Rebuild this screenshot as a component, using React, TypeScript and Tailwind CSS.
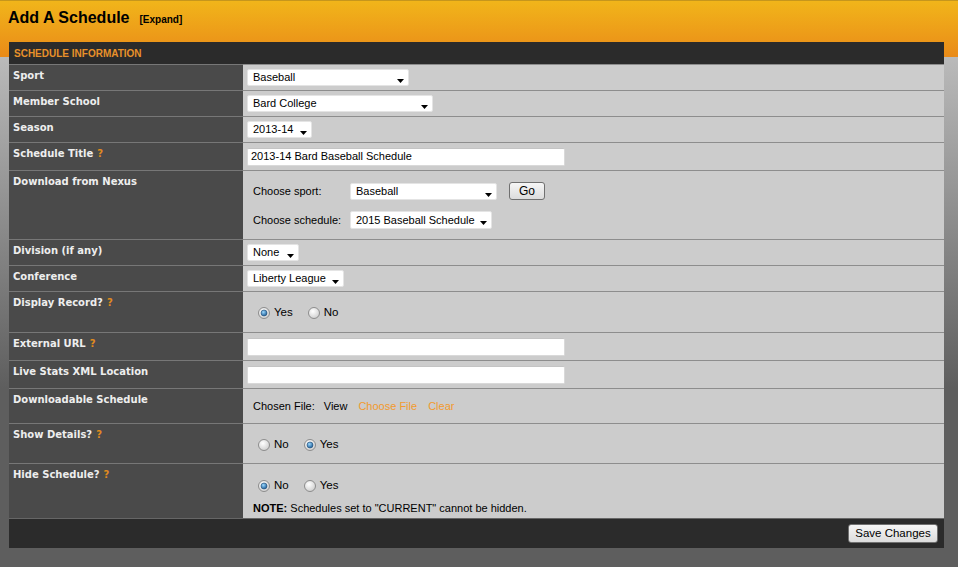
import React from "react";

const body = "font-['Liberation_Sans',Arial,sans-serif]";
const labelFont = "font-['DejaVu_Sans',Verdana,sans-serif]";

function Arrow() {
  return (
    <svg className="absolute right-[4px] top-[9px]" width="7" height="4" viewBox="0 0 7 4">
      <polygon points="0,0 7,0 3.5,4" fill="#000" />
    </svg>
  );
}

function Select({ className, children }: { className: string; children: React.ReactNode }) {
  return (
    <div
      className={`relative h-[17px] bg-white border border-[#e4e4e4] rounded-[2px] flex items-center pl-[5px] text-[11px] text-black ${className}`}
    >
      <span>{children}</span>
      <Arrow />
    </div>
  );
}

function TextInput({ value }: { value?: string }) {
  return (
    <div className="h-[18px] w-[318px] bg-white border border-[#d9d9d9] border-t-[#c4c4c4] rounded-[2px] flex items-center pl-[3px] text-[11px] text-black">
      {value}
    </div>
  );
}

function Radio({ checked }: { checked?: boolean }) {
  return (
    <svg width="12" height="12" viewBox="0 0 12 12" className="shrink-0">
      <defs>
        <radialGradient id="radioBg" cx="40%" cy="35%" r="70%">
          <stop offset="0" stopColor="#ffffff" />
          <stop offset="1" stopColor="#cdcdcd" />
        </radialGradient>
        <radialGradient id="radioDot" cx="40%" cy="35%" r="70%">
          <stop offset="0" stopColor="#9ad8ff" />
          <stop offset="1" stopColor="#17558f" />
        </radialGradient>
      </defs>
      <circle cx="6" cy="6" r="5.5" fill="url(#radioBg)" stroke="#8c8c8c" strokeWidth="1" />
      {checked && <circle cx="6" cy="6" r="3" fill="url(#radioDot)" stroke="#24507a" strokeWidth="0.6" />}
    </svg>
  );
}

function RadioPair({ first, second, firstChecked }: { first: string; second: string; firstChecked: boolean }) {
  return (
    <div className="flex items-center text-[11.5px] text-black">
      <Radio checked={firstChecked} />
      <span className="ml-[4px]">{first}</span>
      <span className="ml-[15px]">
        <Radio checked={!firstChecked} />
      </span>
      <span className="ml-[4px]">{second}</span>
    </div>
  );
}

function Help() {
  return <span className="ml-[4px] text-[#e08a1e]">?</span>;
}

function Row({
  label,
  help,
  height,
  valueClass = "items-center pl-[4px]",
  children,
}: {
  label: string;
  help?: boolean;
  height: string;
  valueClass?: string;
  children?: React.ReactNode;
}) {
  return (
    <div className={`flex ${height}`}>
      <div
        className={`w-[234px] shrink-0 bg-[#4a4a4a] border-t border-[#777777] pl-[4px] pt-[5px] leading-[12px] text-[10px] font-bold text-[#eeeeee] ${labelFont}`}
      >
        {label}
        {help && <Help />}
      </div>
      <div className={`flex-1 flex bg-[#cccccc] border-t border-[#8d8d8d] ${valueClass}`}>{children}</div>
    </div>
  );
}

function Button({ className, children }: { className: string; children: React.ReactNode }) {
  return (
    <div
      className={`flex items-center justify-center border border-[#707070] rounded-[3px] bg-gradient-to-b from-[#f6f6f6] to-[#dcdcdc] text-black ${className}`}
    >
      {children}
    </div>
  );
}

export default function App() {
  return (
    <div className={`min-h-screen bg-[#5e5e5e] ${body}`}>
      <div className="h-[57px] border-t border-[#c6961c] bg-gradient-to-b from-[#f1b51a] to-[#e98a18] pt-[8px] pl-[8px] flex items-baseline">
        <span className="text-[16px] leading-[18px] font-bold text-black">Add A Schedule</span>
        <span className="ml-[10px] text-[10px] font-bold text-black">[Expand]</span>
      </div>
      <div className="flow-root bg-[linear-gradient(to_bottom,#bababa_0%,#5e5e5e_65%)] h-[510px]">
        <div className="relative -mt-[15px] ml-[9px] w-[935px]">
          <div className="h-[22px] bg-[#2b2b2b] flex items-center pl-[5px] text-[10px] font-bold text-[#e8912a]">
            SCHEDULE INFORMATION
          </div>
          <Row label="Sport" height="h-[26px]">
            <Select className="w-[162px]">Baseball</Select>
          </Row>
          <Row label="Member School" height="h-[26px]">
            <Select className="w-[186px]">Bard College</Select>
          </Row>
          <Row label="Season" height="h-[26px]">
            <Select className="w-[65px]">2013-14</Select>
          </Row>
          <Row label="Schedule Title" help height="h-[28px]">
            <TextInput value="2013-14 Bard Baseball Schedule" />
          </Row>
          <Row label="Download from Nexus" height="h-[69px]" valueClass="flex-col items-start pl-[10px] pt-[11px]">
            <div className="flex items-center text-[11px] text-black h-[18px]">
              <span className="w-[97px]">Choose sport:</span>
              <Select className="w-[147px]">Baseball</Select>
              <Button className="ml-[12px] w-[36px] h-[18px] text-[12px]">Go</Button>
            </div>
            <div className="flex items-center text-[11px] text-black h-[18px] mt-[11px]">
              <span className="w-[97px]">Choose schedule:</span>
              <Select className="w-[142px] h-[18px]">2015 Baseball Schedule</Select>
            </div>
          </Row>
          <Row label="Division (if any)" height="h-[26px]">
            <Select className="w-[52px]">None</Select>
          </Row>
          <Row label="Conference" height="h-[26px]">
            <Select className="w-[97px]">Liberty League</Select>
          </Row>
          <Row label="Display Record?" help height="h-[41px]" valueClass="items-center pl-[15px] pt-[2px]">
            <RadioPair first="Yes" second="No" firstChecked />
          </Row>
          <Row label="External URL" help height="h-[28px]">
            <TextInput />
          </Row>
          <Row label="Live Stats XML Location" height="h-[28px]">
            <TextInput />
          </Row>
          <Row label="Downloadable Schedule" height="h-[35px]" valueClass="items-center pl-[10px]">
            <div className="flex items-center text-[11px] text-black">
              <span>Chosen File:</span>
              <span className="ml-[9px]">View</span>
              <span className="ml-[11px] text-[#f29a2e]">Choose File</span>
              <span className="ml-[11px] text-[#f29a2e]">Clear</span>
            </div>
          </Row>
          <Row label="Show Details?" help height="h-[40px]" valueClass="items-center pl-[15px] pt-[3px]">
            <RadioPair first="No" second="Yes" firstChecked={false} />
          </Row>
          <Row label="Hide Schedule?" help height="h-[55px]" valueClass="flex-col items-start pl-[10px] pt-[13px]">
            <div className="ml-[5px]">
              <RadioPair first="No" second="Yes" firstChecked />
            </div>
            <div className="mt-[6px] text-[11px] text-black">
              <span className="font-bold">NOTE:</span> Schedules set to "CURRENT" cannot be hidden.
            </div>
          </Row>
          <div className="h-[30px] bg-[#2b2b2b] border-t border-[#666666] flex items-center justify-end pr-[6px]">
            <Button className="w-[90px] h-[19px] text-[11.5px]">Save Changes</Button>
          </div>
        </div>
      </div>
    </div>
  );
}
